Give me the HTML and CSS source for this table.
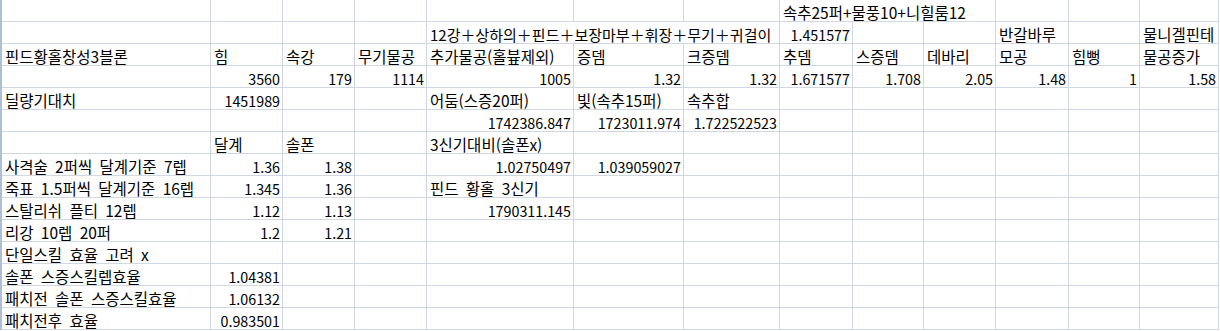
FILE: index.html
```html
<!DOCTYPE html>
<html lang="ko">
<head>
<meta charset="utf-8">
<title>Sheet</title>
<link rel="stylesheet" href="styles.css">
</head>
<body>
<div class="sheet">
  <!-- row 1 -->
  <div class="c"></div><div class="c"></div><div class="c"></div><div class="c"></div><div class="c"></div><div class="c"></div><div class="c"></div>
  <div class="c span3">속추25퍼+물풍10+니힐룸12</div>
  <div class="c"></div><div class="c"></div><div class="c"></div>
  <!-- row 2 -->
  <div class="c"></div><div class="c"></div><div class="c"></div><div class="c"></div>
  <div class="c span3 tight">12강＋상하의＋핀드＋보장마부＋휘장＋무기＋귀걸이</div>
  <div class="c n">1.451577</div><div class="c"></div><div class="c"></div>
  <div class="c">반갈바루</div><div class="c"></div><div class="c">물니겔핀테</div>
  <!-- row 3 -->
  <div class="c">핀드황홀창성3블론</div><div class="c">힘</div><div class="c">속강</div><div class="c">무기물공</div>
  <div class="c">추가물공(홀&#xBE0A;제외)</div><div class="c">증뎀</div><div class="c">크증뎀</div><div class="c">추뎀</div>
  <div class="c">스증뎀</div><div class="c">데바리</div><div class="c">모공</div><div class="c">힘뻥</div><div class="c">물공증가</div>
  <!-- row 4 -->
  <div class="c"></div><div class="c n">3560</div><div class="c n">179</div><div class="c n">1114</div>
  <div class="c n">1005</div><div class="c n">1.32</div><div class="c n">1.32</div><div class="c n">1.671577</div>
  <div class="c n">1.708</div><div class="c n">2.05</div><div class="c n">1.48</div><div class="c n">1</div><div class="c n">1.58</div>
  <!-- row 5 -->
  <div class="c">딜량기대치</div><div class="c n">1451989</div><div class="c"></div><div class="c"></div>
  <div class="c">어둠(스증20퍼)</div><div class="c">빛(속추15퍼)</div><div class="c">속추합</div>
  <div class="c"></div><div class="c"></div><div class="c"></div><div class="c"></div><div class="c"></div><div class="c"></div>
  <!-- row 6 -->
  <div class="c"></div><div class="c"></div><div class="c"></div><div class="c"></div>
  <div class="c n">1742386.847</div><div class="c n">1723011.974</div><div class="c n">1.722522523</div>
  <div class="c"></div><div class="c"></div><div class="c"></div><div class="c"></div><div class="c"></div><div class="c"></div>
  <!-- row 7 -->
  <div class="c"></div><div class="c">달계</div><div class="c">솔폰</div><div class="c"></div>
  <div class="c">3신기대비(솔폰x)</div>
  <div class="c"></div><div class="c"></div><div class="c"></div><div class="c"></div><div class="c"></div><div class="c"></div><div class="c"></div><div class="c"></div>
  <!-- row 8 -->
  <div class="c">사격술 2퍼씩 달계기준 7렙</div><div class="c n">1.36</div><div class="c n">1.38</div><div class="c"></div>
  <div class="c n">1.02750497</div><div class="c n">1.039059027</div>
  <div class="c"></div><div class="c"></div><div class="c"></div><div class="c"></div><div class="c"></div><div class="c"></div><div class="c"></div>
  <!-- row 9 -->
  <div class="c">죽표 1.5퍼씩 달계기준 16렙</div><div class="c n">1.345</div><div class="c n">1.36</div><div class="c"></div>
  <div class="c">핀드 황홀 3신기</div>
  <div class="c"></div><div class="c"></div><div class="c"></div><div class="c"></div><div class="c"></div><div class="c"></div><div class="c"></div><div class="c"></div>
  <!-- row 10 -->
  <div class="c">스탈리쉬 플티 12렙</div><div class="c n">1.12</div><div class="c n">1.13</div><div class="c"></div>
  <div class="c n">1790311.145</div>
  <div class="c"></div><div class="c"></div><div class="c"></div><div class="c"></div><div class="c"></div><div class="c"></div><div class="c"></div><div class="c"></div>
  <!-- row 11 -->
  <div class="c">리강 10렙 20퍼</div><div class="c n">1.2</div><div class="c n">1.21</div>
  <div class="c"></div><div class="c"></div><div class="c"></div><div class="c"></div><div class="c"></div><div class="c"></div><div class="c"></div><div class="c"></div><div class="c"></div><div class="c"></div>
  <!-- row 12 -->
  <div class="c">단일스킬 효율 고려 x</div>
  <div class="c"></div><div class="c"></div><div class="c"></div><div class="c"></div><div class="c"></div><div class="c"></div><div class="c"></div><div class="c"></div><div class="c"></div><div class="c"></div><div class="c"></div><div class="c"></div>
  <!-- row 13 -->
  <div class="c">솔폰 스증스킬렙효율</div><div class="c n">1.04381</div>
  <div class="c"></div><div class="c"></div><div class="c"></div><div class="c"></div><div class="c"></div><div class="c"></div><div class="c"></div><div class="c"></div><div class="c"></div><div class="c"></div><div class="c"></div>
  <!-- row 14 -->
  <div class="c">패치전 솔폰 스증스킬효율</div><div class="c n">1.06132</div>
  <div class="c"></div><div class="c"></div><div class="c"></div><div class="c"></div><div class="c"></div><div class="c"></div><div class="c"></div><div class="c"></div><div class="c"></div><div class="c"></div><div class="c"></div>
  <!-- row 15 -->
  <div class="c">패치전후 효율</div><div class="c n">0.983501</div>
  <div class="c"></div><div class="c"></div><div class="c"></div><div class="c"></div><div class="c"></div><div class="c"></div><div class="c"></div><div class="c"></div><div class="c"></div><div class="c"></div><div class="c"></div>
</div>
</body>
</html>
```

FILE: styles.css
```css
html, body {
  margin: 0;
  padding: 0;
  background: #ffffff;
}
.sheet {
  display: grid;
  grid-template-columns: 209px 72px 72px 72px 147px 110px 96px 73px 71px 72px 73px 71px 79px;
  grid-auto-rows: 22px;
  width: 1217px;
  border-left: 2px solid #aebfd5;
  font-family: "Noto Sans CJK KR", "Noto Sans", sans-serif;
  color: #000000;
}
.c {
  box-sizing: border-box;
  border-right: 1px solid #d0d7e5;
  border-bottom: 1px solid #d0d7e5;
  padding: 4px 3px 0 3px;
  font-size: 15.5px;
  line-height: 17px;
  word-spacing: 3px;
  white-space: nowrap;
  overflow: visible;
}
.n {
  text-align: right;
  padding-right: 2px;
  font-size: 14.3px;
  word-spacing: 0;
}
.tight {
  font-size: 15px;
}
.span3 {
  grid-column: span 3;
}
```
